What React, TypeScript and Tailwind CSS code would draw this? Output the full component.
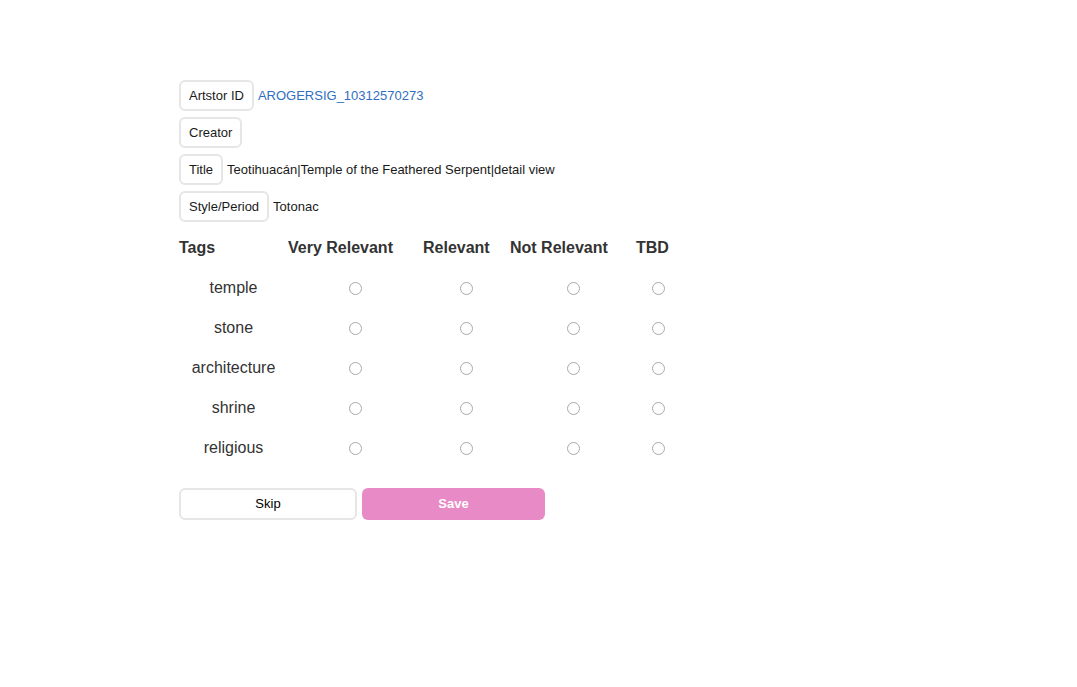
import { useState } from 'react';

const meta = [
    { label: 'Artstor ID', value: 'AROGERSIG_10312570273', link: true },
    { label: 'Creator', value: '' },
    { label: 'Title', value: 'Teotihuacán|Temple of the Feathered Serpent|detail view' },
    { label: 'Style/Period', value: 'Totonac' },
];

const levels = ['Very Relevant', 'Relevant', 'Not Relevant', 'TBD'];
const tags = ['temple', 'stone', 'architecture', 'shrine', 'religious'];

export default function App() {
    const [picked, setPicked] = useState<Record<string, string>>({});

    return (
        <div
            className="min-h-screen bg-white pt-[80px] pl-[179px] text-[#222]"
            style={{ fontFamily: '"Liberation Sans", Arial, sans-serif' }}
        >
            <div className="flex flex-col gap-[6px]">
                {meta.map((m) => (
                    <div key={m.label} className="flex items-center gap-[4px]">
                        <div className="h-[31px] px-[8px] flex items-center border-2 border-[#e6e6e6] rounded-[6px] text-[13px] text-[#1a1a1a]">
                            {m.label}
                        </div>
                        {m.value && (
                            <span className={m.link ? 'text-[13px] text-[#2f6fc0]' : 'text-[13px] text-[#1a1a1a]'}>
                                {m.value}
                            </span>
                        )}
                    </div>
                ))}
            </div>

            <div className="mt-[5px] grid grid-cols-[109px_135px_87px_126px_44px] text-[#333]">
                <div className="h-[41px] flex items-center text-[16px] font-bold">Tags</div>
                {levels.map((l) => (
                    <div key={l} className="h-[41px] flex items-center text-[16px] font-bold whitespace-nowrap">
                        {l}
                    </div>
                ))}
                {tags.map((t) => (
                    <div key={t} className="contents">
                        <div className="h-[40px] flex items-center justify-center text-[16px]">{t}</div>
                        {levels.map((l) => (
                            <div key={l} className="h-[40px] flex items-center justify-center pt-[1px]">
                                <input
                                    type="radio"
                                    name={t}
                                    checked={picked[t] === l}
                                    onChange={() => setPicked({ ...picked, [t]: l })}
                                    className="appearance-none w-[13px] h-[13px] rounded-full border border-[#a9a9a9] bg-white checked:border-4 checked:border-[#3a78c4]"
                                />
                            </div>
                        ))}
                    </div>
                ))}
            </div>

            <div className="mt-[20px] flex gap-[5px]">
                <button className="w-[178px] h-[32px] border-2 border-[#e6e6e6] rounded-[6px] bg-white text-[13px] text-black">
                    Skip
                </button>
                <button className="w-[183px] h-[32px] rounded-[6px] bg-[#e88ac5] text-[13px] font-bold text-white">
                    Save
                </button>
            </div>
        </div>
    );
}
